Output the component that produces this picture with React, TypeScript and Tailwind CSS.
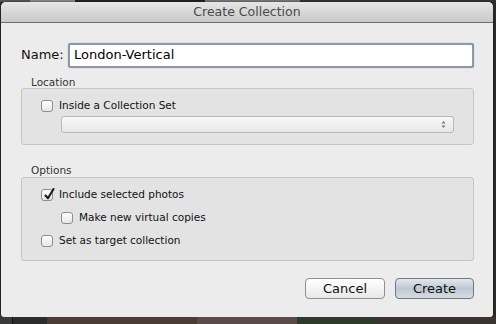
import React from "react";

const font = { fontFamily: '"DejaVu Sans", "Liberation Sans", sans-serif' };

function Check({ checked }: { checked?: boolean }) {
  return (
    <span className="relative inline-block shrink-0 w-[12px] h-[12px] rounded-[3px] border border-[#8e8e8e] bg-gradient-to-b from-[#ffffff] to-[#e6e6e6] shadow-[inset_0_1px_0_#fff]">
      {checked && (
        <svg className="absolute left-[1px] top-[-3px]" width="13" height="14" viewBox="0 0 13 14">
          <path d="M2.5 8.5 L5 11.2 L10.5 2" fill="none" stroke="#1e1e1e" strokeWidth="2.1" strokeLinecap="round" strokeLinejoin="round" />
        </svg>
      )}
    </span>
  );
}

export default function App() {
  return (
    <div className="w-[496px] h-[324px] bg-[#2b2a28] overflow-hidden flex flex-col" style={font}>
      <div className="h-[2px] flex">
        <div className="w-[30px] bg-[#555]" />
        <div className="w-[45px] bg-[#888]" />
        <div className="w-[130px] bg-[#222]" />
        <div className="w-[95px] bg-[#777]" />
        <div className="flex-1 bg-[#333]" />
      </div>
      <div className="ml-[1px] w-[492px] h-[315px] rounded-t-[5px] rounded-b-[3px] bg-[#ececec] flex flex-col overflow-hidden shadow-[0_0_2px_rgba(0,0,0,0.6)]">
        <div className="h-[21px] shrink-0 bg-gradient-to-b from-[#e6e6e6] to-[#c9c9c9] border-b border-[#6e6e6e] flex items-center justify-center text-[12.5px] text-[#4a4a4a]">
          Create Collection
        </div>
        <div className="flex-1 flex flex-col pl-[20px] pr-[19px]">
          <div className="flex items-center mt-[19px] h-[26px]">
            <span className="w-[47px] text-right pr-[5px] text-[13px] text-[#111]">Name:</span>
            <div className="flex-1 h-[25px] rounded-[3px] border-[2px] border-[#8d99a4] bg-white shadow-[0_0_1px_#6b7a88] flex items-center pl-[4px] text-[13px] text-black">
              London-Vertical
            </div>
          </div>

          <div className="mt-[8px] pl-[10px] text-[10.5px] text-[#333] leading-[12px]">Location</div>
          <div className="mt-0 h-[57px] rounded-[3px] border border-[#c6c6c6] bg-[#e3e3e3] flex flex-col pl-[19px] pr-[19px]">
            <div className="flex items-center gap-[6px] mt-[10px] h-[14px] text-[10.5px] text-[#111]">
              <Check />
              <span>Inside a Collection Set</span>
            </div>
            <div className="mt-[3px] ml-[20px] h-[17px] rounded-[3px] border border-[#b9b9b9] bg-gradient-to-b from-[#f8f8f8] to-[#e7e7e7] flex items-center justify-end pr-[7px]">
              <svg width="5" height="9" viewBox="0 0 5 9">
                <path d="M0.5 3.5 L2.5 1 L4.5 3.5 Z" fill="#777" />
                <path d="M0.5 5.5 L2.5 8 L4.5 5.5 Z" fill="#777" />
              </svg>
            </div>
          </div>

          <div className="mt-[19px] pl-[10px] text-[10.5px] text-[#333] leading-[12px]">Options</div>
          <div className="mt-[1px] h-[84px] rounded-[3px] border border-[#c6c6c6] bg-[#e3e3e3] flex flex-col pl-[19px] text-[10.5px] text-[#111]">
            <div className="flex items-center gap-[6px] mt-[10px] h-[14px]">
              <Check checked />
              <span>Include selected photos</span>
            </div>
            <div className="flex items-center gap-[6px] mt-[9px] h-[14px] pl-[20px]">
              <Check />
              <span>Make new virtual copies</span>
            </div>
            <div className="flex items-center gap-[6px] mt-[9px] h-[14px]">
              <Check />
              <span>Set as target collection</span>
            </div>
          </div>

          <div className="flex justify-end gap-[10px] mt-[17px]">
            <div className="w-[80px] h-[21px] rounded-[4px] border border-[#8f8f8f] bg-gradient-to-b from-[#ffffff] to-[#e8e8e8] flex items-center justify-center text-[13px] text-[#111]">
              Cancel
            </div>
            <div className="w-[79px] h-[21px] rounded-[4px] border border-[#6f7782] bg-gradient-to-b from-[#e4e8ee] via-[#bfc7d1] to-[#d6dce3] flex items-center justify-center text-[13px] text-[#111]">
              Create
            </div>
          </div>
        </div>
      </div>
      <div className="flex-1 flex">
        <div className="w-[12px] bg-[#3a3a3a]" />
        <div className="w-[35px] bg-[#2c2c2c] border-l border-[#111]" />
        <div className="w-[150px] bg-[#4a3b35]" />
        <div className="w-[100px] bg-[#5a4a48]" />
        <div className="w-[80px] bg-[#2e3a2a]" />
        <div className="flex-1 bg-[#3b3330]" />
      </div>
    </div>
  );
}
